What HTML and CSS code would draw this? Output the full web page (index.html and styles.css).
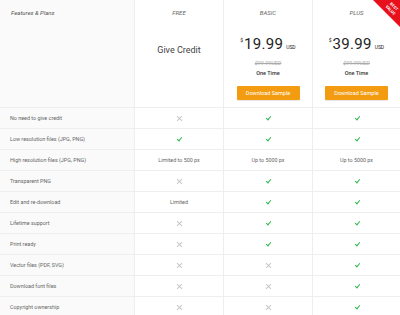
FILE: index.html
```html
<!DOCTYPE html>
<html>
<head>
    <title>Features & Plans</title>
    <link rel="stylesheet" href="styles.css">
</head>
<body>
    <div class="plans">
        <div class="row head">
            <div class="cell feature">
                <div class="plan-name">Features &amp; Plans</div>
            </div>
            <div class="cell">
                <div class="plan-name">FREE</div>
                <div class="give-credit">Give Credit</div>
            </div>
            <div class="cell">
                <div class="plan-name">BASIC</div>
                <div class="price"><sup>$</sup>19.99<small>USD</small></div>
                <div class="old-price">$99.99USD</div>
                <div class="once">One Time</div>
                <a class="btn" href="#">Download Sample</a>
            </div>
            <div class="cell best">
                <div class="ribbon"><span>BEST<br>VALUE</span></div>
                <div class="plan-name">PLUS</div>
                <div class="price"><sup>$</sup>39.99<small>USD</small></div>
                <div class="old-price">$99.99USD</div>
                <div class="once">One Time</div>
                <a class="btn" href="#">Download Sample</a>
            </div>
        </div>

        <div class="row">
            <div class="cell feature">No need to give credit</div>
            <div class="cell"><span class="no"></span></div>
            <div class="cell"><span class="yes"></span></div>
            <div class="cell"><span class="yes"></span></div>
        </div>
        <div class="row">
            <div class="cell feature">Low resolution files (JPG, PNG)</div>
            <div class="cell"><span class="yes"></span></div>
            <div class="cell"><span class="yes"></span></div>
            <div class="cell"><span class="yes"></span></div>
        </div>
        <div class="row">
            <div class="cell feature">High resolution files (JPG, PNG)</div>
            <div class="cell">Limited to 500 px</div>
            <div class="cell">Up to 5000 px</div>
            <div class="cell">Up to 5000 px</div>
        </div>
        <div class="row">
            <div class="cell feature">Transparent PNG</div>
            <div class="cell"><span class="no"></span></div>
            <div class="cell"><span class="yes"></span></div>
            <div class="cell"><span class="yes"></span></div>
        </div>
        <div class="row">
            <div class="cell feature">Edit and re-download</div>
            <div class="cell">Limited</div>
            <div class="cell"><span class="yes"></span></div>
            <div class="cell"><span class="yes"></span></div>
        </div>
        <div class="row">
            <div class="cell feature">Lifetime support</div>
            <div class="cell"><span class="no"></span></div>
            <div class="cell"><span class="yes"></span></div>
            <div class="cell"><span class="yes"></span></div>
        </div>
        <div class="row">
            <div class="cell feature">Print ready</div>
            <div class="cell"><span class="no"></span></div>
            <div class="cell"><span class="yes"></span></div>
            <div class="cell"><span class="yes"></span></div>
        </div>
        <div class="row">
            <div class="cell feature">Vector files (PDF, SVG)</div>
            <div class="cell"><span class="no"></span></div>
            <div class="cell"><span class="no"></span></div>
            <div class="cell"><span class="yes"></span></div>
        </div>
        <div class="row">
            <div class="cell feature">Download font files</div>
            <div class="cell"><span class="no"></span></div>
            <div class="cell"><span class="no"></span></div>
            <div class="cell"><span class="yes"></span></div>
        </div>
        <div class="row">
            <div class="cell feature">Copyright ownership</div>
            <div class="cell"><span class="no"></span></div>
            <div class="cell"><span class="no"></span></div>
            <div class="cell"><span class="yes"></span></div>
        </div>
    </div>
</body>
</html>
```

FILE: styles.css
```css
body {
    margin: 0;
    background: #fff;
    font-family: Roboto, "Liberation Sans", sans-serif;
    color: #666;
}

.plans {
    width: 400px;
}

.row {
    display: grid;
    grid-template-columns: 134px 89px 89px 88px;
    border-bottom: 1px solid #eee;
    height: 20px;
}

.row.head {
    height: 107px;
}

.cell {
    display: flex;
    flex-direction: column;
    align-items: center;
    justify-content: center;
    border-left: 1px solid #eee;
    font-size: 5.4px;
    color: #666;
}

.cell.feature {
    align-items: flex-start;
    border-left: 0;
    background: #fafafa;
    padding-left: 10px;
}

/* шапка */
.head .cell {
    justify-content: flex-start;
    position: relative;
    overflow: hidden;
}

.plan-name {
    margin-top: 9px;
    line-height: 8px;
    font-size: 6px;
    font-style: italic;
    color: #666;
}

.feature .plan-name {
    margin-left: 1px;
    color: #555;
}

.give-credit {
    margin-top: 27px;
    line-height: 12px;
    font-size: 9px;
    color: #444;
}

.price {
    margin-top: 15px;
    line-height: 16px;
    font-size: 15px;
    color: #222;
    letter-spacing: 0.3px;
}

.price sup {
    font-size: 5px;
    vertical-align: 7px;
    margin-right: 0.5px;
}

.price small {
    font-size: 5px;
    margin-left: 3px;
    letter-spacing: 0;
}

.old-price {
    margin-top: 4px;
    line-height: 8px;
    font-size: 5.5px;
    font-style: italic;
    color: #aaa;
    text-decoration: line-through;
}

.once {
    margin-top: 2px;
    line-height: 8px;
    font-size: 5.5px;
    font-weight: 500;
    color: #333;
}

.btn {
    margin-top: 9px;
    width: 63px;
    height: 14px;
    line-height: 14px;
    text-align: center;
    background: #f39c12;
    border-radius: 1px;
    color: #fff;
    font-size: 5.5px;
    text-decoration: none;
    box-shadow: 0 1px 1px rgba(0, 0, 0, 0.1);
}

.ribbon {
    position: absolute;
    top: 0;
    right: 0;
    width: 27px;
    height: 27px;
    background: #e8101c;
    clip-path: polygon(0 0, 100% 0, 100% 100%);
}

.ribbon span {
    position: absolute;
    top: 4px;
    left: 11px;
    width: 16px;
    text-align: center;
    transform: rotate(45deg);
    color: #fff;
    font-size: 4px;
    line-height: 4.5px;
    font-weight: 700;
}

/* иконки */
.yes {
    width: 4px;
    height: 2px;
    margin-top: -1px;
    margin-left: 1px;
    border-left: 1.4px solid #2eb84b;
    border-bottom: 1.4px solid #2eb84b;
    transform: rotate(-50deg);
}

.no {
    position: relative;
    width: 6px;
    height: 6px;
}

.no::before,
.no::after {
    content: '';
    position: absolute;
    left: -0.5px;
    top: 2.5px;
    width: 7px;
    height: 1px;
    background: #c8c8c8;
    transform: rotate(45deg);
}

.no::after {
    transform: rotate(-45deg);
}
```
